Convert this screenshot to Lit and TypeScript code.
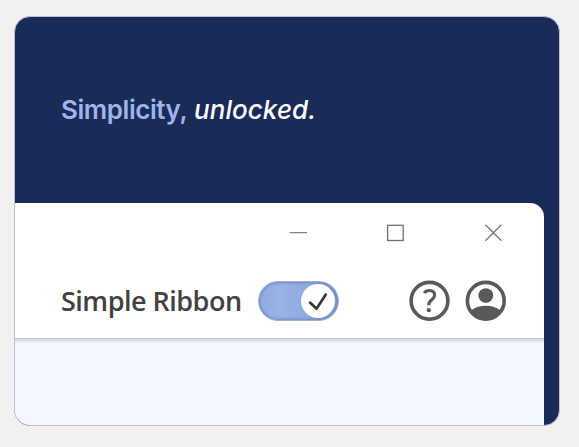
import { LitElement, html, css } from "lit";
import { customElement } from "lit/decorators.js";

@customElement("app-root")
export class AppRoot extends LitElement {
  static styles = css`
    :host { display: block; box-sizing: border-box; width: 579px; height: 447px; padding: 16px 19px 21px 14px; background: #f1f1f1; overflow: hidden; }
    .card { box-sizing: border-box; width: 546px; height: 410px; display: flex; flex-direction: column; background: #1b2b58; border: 1px solid #b9c1d2; border-radius: 16px; overflow: hidden; }
    .headline { height: 186px; flex: none; box-sizing: border-box; padding: 0 0 0 46px; display: flex; align-items: center; white-space: pre; font: 600 26px/36px Inter, "Liberation Sans", sans-serif; }
    .lead { color: #9db5e8; width: 133px; letter-spacing: -0.45px; }
    .accent { color: #fff; font-style: italic; font-weight: 540; letter-spacing: 0.06px; }
    .window { flex: 1; width: 529px; display: flex; flex-direction: column; background: #fff; border-top-right-radius: 14px; overflow: hidden; }
    .controls { height: 60px; display: flex; justify-content: flex-end; align-items: center; gap: 78px; padding-right: 41px; }
    .controls svg { width: 20px; height: 20px; }
    .ribbon { height: 75px; display: flex; align-items: center; padding: 0 38px 0 46px; }
    .label { width: 197px; font: 560 27px/36px "Open Sans", "Noto Sans", sans-serif; letter-spacing: -0.5px; color: #414141; white-space: nowrap; }
    .toggle { box-sizing: border-box; width: 81px; height: 40px; border-radius: 20px; border: 1px solid #9fb0cf; background: linear-gradient(90deg, #91ace0, #9ab2e6 25%, #91aadf 60%, #7d98ce); box-shadow: inset 0 0 3px 1px #7188b8; display: flex; justify-content: flex-end; align-items: center; padding-right: 3px; }
    .knob { width: 34px; height: 34px; border-radius: 50%; background: #fff; }
    .knob svg { display: block; }
    .icons { margin-left: auto; display: flex; gap: 15px; }
    .icons svg { display: block; }
    .body { flex: 1; background: linear-gradient(#c0c3c5 0 1px, #dce0e3 1px 3px, #e7ecf0 3px 4px, #f3f8fe 5px); }
  `;

  render() {
    return html`
      <div class="card">
        <div class="headline"><span class="lead">Simplicity,</span><span class="accent">unlocked.</span></div>
        <div class="window">
          <div class="controls">
            <svg viewBox="0 0 20 20"><path d="M2.6 9.7h17.4" stroke="#858585" stroke-width="1.3" /></svg>
            <svg viewBox="0 0 20 20"><rect x="2.6" y="2.3" width="15.6" height="15.2" fill="none" stroke="#707070" stroke-width="1.3" /></svg>
            <svg viewBox="0 0 20 20"><path d="M2.4 1.8l16 16m0-16l-16 16" stroke="#777" stroke-width="1.3" /></svg>
          </div>
          <div class="ribbon">
            <span class="label">Simple Ribbon</span>
            <div class="toggle"><div class="knob">
              <svg width="34" height="34" viewBox="0 0 34 34"><path d="M9 18.6l6.5 6.2 9.3-14.2" fill="none" stroke="#363636" stroke-width="2.7" stroke-linecap="round" stroke-linejoin="round" /></svg>
            </div></div>
            <div class="icons">
              <svg width="41" height="41" viewBox="0 0 41 41" fill="none" stroke="#595959">
                <circle cx="20.5" cy="20.8" r="18.4" stroke-width="3.6" />
                <path d="M15.3 13.1c1.2-1.8 2.8-2.6 5.1-2.6 3.1 0 5.2 1.8 5.2 4.4 0 5-5.9 4.9-5.9 10.3" stroke-width="3.2" />
                <circle cx="19.8" cy="30.2" r="2.1" fill="#595959" stroke="none" />
              </svg>
              <svg width="41" height="41" viewBox="0 0 41 41">
                <circle cx="20.8" cy="20.8" r="18.4" fill="#fff" stroke="#595959" stroke-width="3.6" />
                <circle cx="20.8" cy="15.6" r="7.4" fill="#595959" />
                <path d="M6 30.5C9.5 27.4 15 25.8 20.8 25.8S32 27.4 35.6 30.5C32 36 27 39 20.8 39S9.5 36 6 30.5z" fill="#595959" />
              </svg>
            </div>
          </div>
          <div class="body"></div>
        </div>
      </div>
    `;
  }
}
